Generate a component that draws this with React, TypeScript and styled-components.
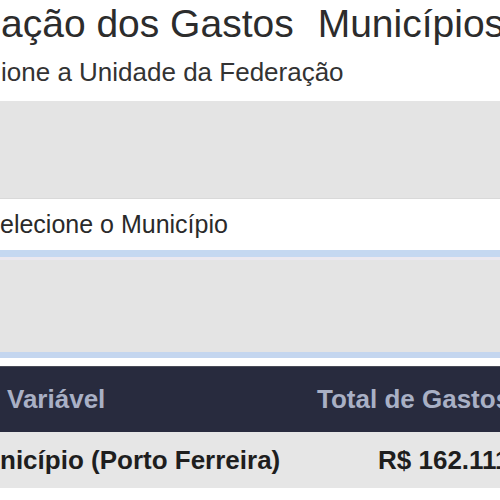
import React from "react";
import styled, { createGlobalStyle } from "styled-components";

const GlobalStyle = createGlobalStyle`
  html, body {
    margin: 0;
    padding: 0;
    background: #ffffff;
    overflow: hidden;
  }
  body {
    font-family: "Liberation Sans", Arial, Helvetica, sans-serif;
  }
`;

const Page = styled.div`
  width: 500px;
  height: 500px;
  overflow: hidden;
  background: #ffffff;
  padding-top: 4px;
  box-sizing: border-box;
`;

const Title = styled.h1`
  display: flex;
  gap: 24px;
  margin: 0;
  padding-left: 1px;
  font-size: 39px;
  line-height: 39px;
  font-weight: normal;
  color: #2c2c2c;
  white-space: nowrap;
`;

const Label = styled.p`
  margin: 16px 0 16px;
  padding-left: 1px;
  font-size: 26px;
  line-height: 26px;
  color: #333333;
  white-space: nowrap;
`;

const StatePanel = styled.div`
  height: 97px;
  background: #e4e4e4;
  border-bottom: 1px solid #d9d9d9;
`;

const CityInput = styled.div`
  display: flex;
  align-items: center;
  height: 51px;
  background: #ffffff;
  font-size: 25px;
  color: #2a2a2a;
  white-space: nowrap;
`;

const CityList = styled.div`
  height: 95px;
  background: #e4e4e4;
  border-top: 7px solid #c5d8f1;
  border-bottom: 6px solid #c4d6ef;
  box-shadow: inset 0 3px 0 #ebe8ef;
`;

const Table = styled.div`
  margin-top: 8px;
  display: grid;
  grid-template-columns: 300px 1fr;
  white-space: nowrap;
`;

const HeadCell = styled.div<{ $pad: number }>`
  display: flex;
  align-items: center;
  height: 65px;
  padding-left: ${(p) => p.$pad}px;
  background: #282b3e;
  border-top: 1px solid #4a4c58;
  font-size: 26px;
  font-weight: bold;
  color: #a9b0c5;
`;

const BodyCell = styled.div<{ $pad: number }>`
  display: flex;
  align-items: center;
  height: 56px;
  padding-left: ${(p) => p.$pad}px;
  background: #e6e6e6;
  font-size: 26px;
  font-weight: bold;
  color: #1e1e1e;
`;

export default function App() {
  return (
    <Page>
      <GlobalStyle />
      <Title>
        <span>ação dos Gastos</span>
        <span>Municípios</span>
      </Title>
      <Label>ione a Unidade da Federação</Label>
      <StatePanel />
      <CityInput>elecione o Município</CityInput>
      <CityList />
      <Table>
        <HeadCell $pad={7}>Variável</HeadCell>
        <HeadCell $pad={17}>Total de Gastos</HeadCell>
        <BodyCell $pad={0}>nicípio (Porto Ferreira)</BodyCell>
        <BodyCell $pad={78}>R$ 162.111,87</BodyCell>
      </Table>
    </Page>
  );
}
